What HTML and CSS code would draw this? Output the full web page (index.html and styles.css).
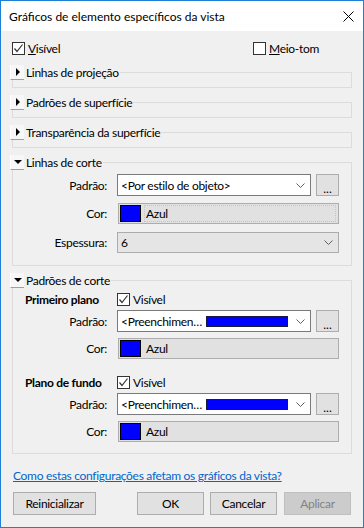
FILE: index.html
```html
<!DOCTYPE html>
<html lang="pt">
<head>
    <meta charset="UTF-8">
    <title>Gráficos de elemento específicos da vista</title>
    <link rel="stylesheet" href="styles.css">
</head>
<body>
    <div class="window">
        <div class="titlebar">
            <span>Gráficos de elemento específicos da vista</span>
            <svg class="close" width="11" height="11" viewBox="0 0 11 11">
                <path d="M0.5 0.5 L10.5 10.5 M10.5 0.5 L0.5 10.5" stroke="#000" stroke-width="1" fill="none"/>
            </svg>
        </div>

        <div class="content">
            <div class="toprow">
                <label class="check first">
                    <span class="box"><svg width="11" height="11" viewBox="0 0 11 11"><path d="M1.5 5.5 L4 8.5 L9.5 1.5" stroke="#333" stroke-width="1.2" fill="none"/></svg></span>
                    <span><u>V</u>isível</span>
                </label>
                <label class="check">
                    <span class="box"></span>
                    <span><u>M</u>eio-tom</span>
                </label>
            </div>

            <fieldset class="group">
                <legend><span class="tab"><i class="arrow-right"></i></span>Linhas de projeção</legend>
                <div class="shut"></div>
            </fieldset>

            <fieldset class="group">
                <legend><span class="tab"><i class="arrow-right"></i></span>Padrões de superfície</legend>
                <div class="shut"></div>
            </fieldset>

            <fieldset class="group">
                <legend><span class="tab"><i class="arrow-right"></i></span>Transparência da superfície</legend>
                <div class="shut"></div>
            </fieldset>

            <fieldset class="group open cut-lines">
                <legend><span class="tab"><i class="arrow-down"></i></span>Linhas de corte</legend>
                <div class="row">
                    <span class="lbl">Padrão:</span>
                    <div class="combo">
                        <span class="val">&lt;Por estilo de objeto&gt;</span>
                        <svg class="chev" width="9" height="5" viewBox="0 0 9 5"><path d="M0.5 0.5 L4.5 4.5 L8.5 0.5" stroke="#606060" fill="none"/></svg>
                    </div>
                    <button class="dots">...</button>
                </div>
                <div class="row r-color">
                    <span class="lbl">Cor:</span>
                    <div class="color">
                        <span class="swatch"></span>
                        <span class="name focus">Azul</span>
                    </div>
                </div>
                <div class="row r-weight">
                    <span class="lbl">Espessura:</span>
                    <div class="combo wide gray">
                        <span class="val">6</span>
                        <svg class="chev" width="9" height="5" viewBox="0 0 9 5"><path d="M0.5 0.5 L4.5 4.5 L8.5 0.5" stroke="#606060" fill="none"/></svg>
                    </div>
                </div>
            </fieldset>

            <fieldset class="group open cut-patterns">
                <legend><span class="tab"><i class="arrow-down"></i></span>Padrões de corte</legend>

                <div class="row sub">
                    <span class="lbl bold">Primeiro plano</span>
                    <label class="check">
                        <span class="box"><svg width="11" height="11" viewBox="0 0 11 11"><path d="M1.5 5.5 L4 8.5 L9.5 1.5" stroke="#333" stroke-width="1.2" fill="none"/></svg></span>
                        <span>Visível</span>
                    </label>
                </div>
                <div class="row r-pattern">
                    <span class="lbl">Padrão:</span>
                    <div class="combo">
                        <span class="val short">&lt;Preenchimen…</span>
                        <span class="fill"></span>
                        <svg class="chev" width="9" height="5" viewBox="0 0 9 5"><path d="M0.5 0.5 L4.5 4.5 L8.5 0.5" stroke="#606060" fill="none"/></svg>
                    </div>
                    <button class="dots">...</button>
                </div>
                <div class="row r-color">
                    <span class="lbl">Cor:</span>
                    <div class="color">
                        <span class="swatch"></span>
                        <span class="name">Azul</span>
                    </div>
                </div>

                <div class="row sub second">
                    <span class="lbl bold">Plano de fundo</span>
                    <label class="check">
                        <span class="box"><svg width="11" height="11" viewBox="0 0 11 11"><path d="M1.5 5.5 L4 8.5 L9.5 1.5" stroke="#333" stroke-width="1.2" fill="none"/></svg></span>
                        <span>Visível</span>
                    </label>
                </div>
                <div class="row r-pattern">
                    <span class="lbl">Padrão:</span>
                    <div class="combo">
                        <span class="val short">&lt;Preenchimen…</span>
                        <span class="fill"></span>
                        <svg class="chev" width="9" height="5" viewBox="0 0 9 5"><path d="M0.5 0.5 L4.5 4.5 L8.5 0.5" stroke="#606060" fill="none"/></svg>
                    </div>
                    <button class="dots">...</button>
                </div>
                <div class="row r-color">
                    <span class="lbl">Cor:</span>
                    <div class="color">
                        <span class="swatch"></span>
                        <span class="name">Azul</span>
                    </div>
                </div>
            </fieldset>

            <a class="help" href="#">Como estas configurações afetam os gráficos da vista?</a>
        </div>

        <div class="buttons">
            <button class="btn reset">Reinicializar</button>
            <button class="btn">OK</button>
            <button class="btn">Cancelar</button>
            <button class="btn" disabled>Aplicar</button>
        </div>
    </div>
</body>
</html>
```

FILE: styles.css
```css
* {
    margin: 0;
    padding: 0;
    box-sizing: border-box;
}

body {
    font-family: Lato, "Noto Sans", sans-serif;
    font-size: 12px;
    letter-spacing: -0.3px;
    color: #000;
    background: #fff;
}

.window {
    width: 364px;
    height: 528px;
    border: 1px solid #1c80d6;
    background: #f0f0f0;
    display: flex;
    flex-direction: column;
}

.titlebar {
    height: 30px;
    background: #fff;
    display: flex;
    align-items: center;
    justify-content: space-between;
    padding: 0 9px 0 8px;
    letter-spacing: 0;
}

.content {
    padding: 9px 11px 0 11px;
}

.toprow {
    display: flex;
    align-items: center;
    height: 16px;
}

.check {
    display: flex;
    align-items: center;
    gap: 3px;
    white-space: nowrap;
}

.check.first {
    width: 241px;
}

.box {
    width: 13px;
    height: 13px;
    border: 1px solid #333;
    background: #fff;
    display: flex;
}

/* group boxes */
.group {
    border: 1px solid #dcdcdc;
    padding: 0 12px 0 0;
    margin-top: 7px;
    min-inline-size: 0;
}

.toprow + .group {
    margin-top: 9px;
}

.group legend {
    display: flex;
    align-items: center;
    height: 15px;
    margin-left: -3px;
    padding-right: 1px;
    white-space: nowrap;
}

.tab {
    width: 14px;
    height: 15px;
    margin-right: 2px;
    background: #f7f7f7;
    border-bottom: 1px solid #a0a0a0;
    border-left: 1px solid #fff;
    display: flex;
    align-items: center;
    justify-content: center;
}

.arrow-right {
    width: 0;
    height: 0;
    border-left: 4px solid #000;
    border-top: 4px solid transparent;
    border-bottom: 4px solid transparent;
}

.arrow-down {
    width: 0;
    height: 0;
    border-top: 4px solid #000;
    border-left: 4px solid transparent;
    border-right: 4px solid transparent;
}

.shut {
    height: 7px;
}

.cut-lines {
    padding-top: 4px;
    padding-bottom: 12px;
}

.cut-patterns {
    padding-top: 3px;
    padding-bottom: 11px;
}

/* rows */
.row {
    display: flex;
    align-items: center;
}

.lbl {
    width: 94px;
    flex: none;
    margin-right: 10px;
    text-align: right;
    white-space: nowrap;
}

.lbl.bold {
    font-weight: bold;
    text-align: left;
    padding-left: 12px;
}

.r-color {
    margin-top: 7px;
}

.r-weight {
    margin-top: 8px;
}

.sub {
    height: 16px;
}

.sub.second {
    margin-top: 15px;
}

.r-pattern {
    margin-top: 3px;
}

.cut-patterns .r-color {
    margin-top: 6px;
}

.combo {
    width: 194px;
    height: 22px;
    border: 1px solid #7a7a7a;
    background: #fff;
    display: flex;
    align-items: center;
    padding: 0 5px 0 3px;
}

.combo.wide {
    width: 222px;
}

.combo.gray {
    background: #e5e5e5;
    border-color: #acacac;
    height: 21px;
}

.val {
    flex: 1;
    white-space: nowrap;
}

.val.short {
    flex: none;
    width: 85px;
}

.fill {
    width: 82px;
    height: 11px;
    background: #0000ff;
    border: 1px solid #1a1a40;
    margin-right: auto;
}

.dots {
    width: 23px;
    height: 22px;
    margin-left: 5px;
    background: #e1e1e1;
    border: 1px solid #adadad;
    font-family: inherit;
    font-size: 12px;
    line-height: 22px;
    padding-top: 3px;
}

.color {
    width: 221px;
    height: 21px;
    margin-left: 1px;
    background: #e1e1e1;
    border: 1px solid #adadad;
    display: flex;
    align-items: center;
    padding: 0 2px 0 1px;
}

.swatch {
    width: 21px;
    height: 17px;
    background: #0000ff;
    border: 1px solid #000;
}

.name {
    flex: 1;
    height: 17px;
    line-height: 15px;
    margin-left: 3px;
    padding-left: 1px;
    border: 1px dotted transparent;
}

.name.focus {
    border-color: #dede00;
}

.help {
    display: block;
    margin-top: 14px;
    margin-left: 1px;
    line-height: 16px;
    color: #0066cc;
    text-decoration: underline;
}

.buttons {
    display: flex;
    margin-top: 8px;
    padding: 0 12px;
    gap: 6px;
}

.btn {
    width: 67px;
    height: 23px;
    background: #e1e1e1;
    border: 1px solid #adadad;
    font-family: inherit;
    font-size: 12px;
    letter-spacing: inherit;
    color: #000;
}

.btn.reset {
    width: 83px;
    margin-right: auto;
}

.btn:last-child {
    margin-left: 1px;
}

.btn:disabled {
    background: #cccccc;
    border-color: #bfbfbf;
    color: #838383;
}
```
